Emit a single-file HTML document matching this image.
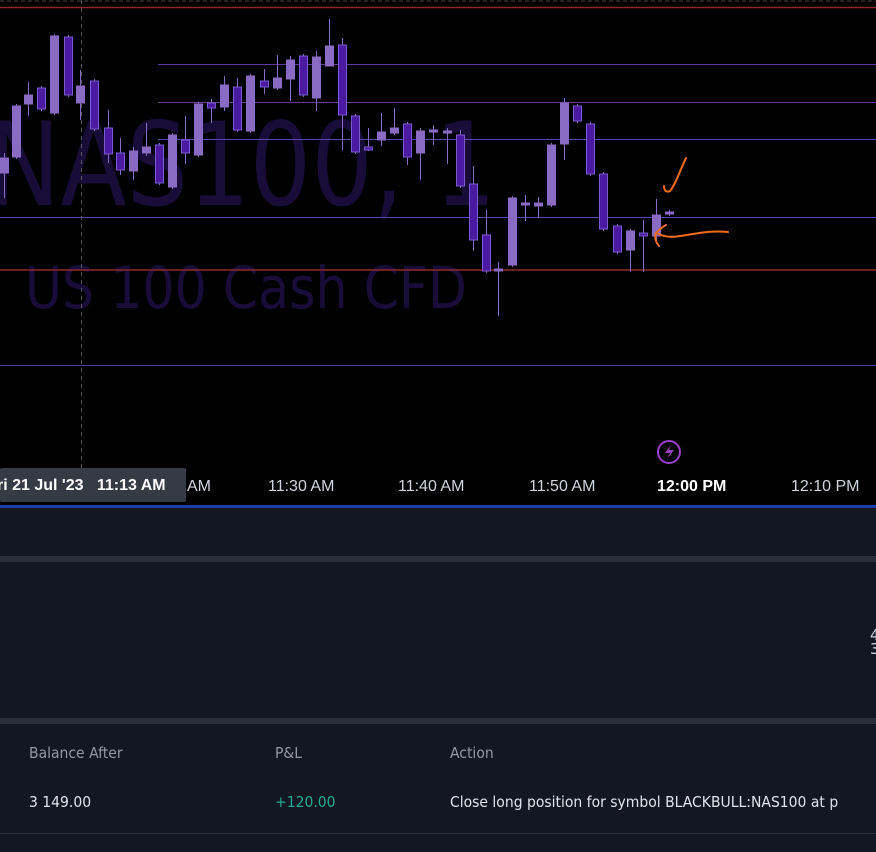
<!DOCTYPE html>
<html><head><meta charset="utf-8"><style>
html,body{margin:0;padding:0;background:#000;width:876px;height:852px;overflow:hidden;font-family:"DejaVu Sans","Liberation Sans",sans-serif}
.t{position:absolute;white-space:nowrap}
.b{font-size:15px;transform-origin:0 0;transform:scaleX(0.93)}
</style></head><body>
<svg width="876" height="852" style="position:absolute;left:0;top:0">
<rect width="876" height="508" fill="#000"/>
<text x="-12" y="205" font-family="DejaVu Sans,sans-serif" font-size="116" fill="#170d38" textLength="508" lengthAdjust="spacingAndGlyphs">NAS100, 1</text>
<text x="25" y="308" font-family="DejaVu Sans,sans-serif" font-size="58" fill="#170d38" textLength="442" lengthAdjust="spacingAndGlyphs">US 100 Cash CFD</text>
<line x1="0" y1="1" x2="876" y2="1" stroke="#444" stroke-dasharray="4,3"/>
<line x1="0" y1="7.5" x2="876" y2="7.5" stroke="#8a2a2a" stroke-width="1.5"/>
<line x1="158" y1="64.5" x2="876" y2="64.5" stroke="#5f3a9a"/>
<line x1="158" y1="102.5" x2="876" y2="102.5" stroke="#6a3a8a"/>
<line x1="158" y1="139.5" x2="876" y2="139.5" stroke="#5a44b0"/>
<line x1="0" y1="217.5" x2="876" y2="217.5" stroke="#5a44b0"/>
<line x1="0" y1="270" x2="876" y2="270" stroke="#8a2a2a" stroke-width="1.5"/>
<line x1="0" y1="365.5" x2="876" y2="365.5" stroke="#4a3a90"/>
<line x1="81.5" y1="0" x2="81.5" y2="468" stroke="#555" stroke-dasharray="4,4"/>
<g id="c"></g>
<path d="M686 158 C680 170 676 184 670 191 C666 193 664 190 664 186" fill="none" stroke="#f26a1b" stroke-width="2" stroke-linecap="round"/>
<path d="M728 232 C710 230 695 234 680 236 C670 238 662 236 656 233 C660 229 664 226 666 225 M656 233 C654 238 656 242 659 246" fill="none" stroke="#f26a1b" stroke-width="2" stroke-linecap="round"/>
<circle cx="669" cy="452" r="11" fill="none" stroke="#9c3fc9" stroke-width="2"/>
<path d="M671 445 L665 453 L670 453 L667 459 L674 450 L669 450 Z" fill="#9c3fc9"/>
<rect x="0" y="505" width="876" height="3" fill="#1e3fa8"/>
<rect x="0" y="508" width="876" height="344" fill="#131722"/>
<rect x="0" y="556" width="876" height="6" fill="#2a2e39"/>
<rect x="0" y="718" width="876" height="6" fill="#2a2e39"/>
<rect x="0" y="833" width="876" height="1" fill="#2a2e39"/>
<rect x="0" y="468" width="186" height="34" rx="2" fill="#363a45"/>
</svg>
<div class="t" style="left:-3px;top:477px;color:#fff;font-size:16px;font-family:'Liberation Sans',sans-serif;font-weight:bold">ri 21 Jul '23 &nbsp; 11:13 AM</div>
<div class="t" style="left:187px;top:478px;color:#d1d4dc;font-size:16px;font-family:'Liberation Sans',sans-serif">AM</div>
<div class="t" style="left:268px;top:478px;color:#d1d4dc;font-size:16px;font-family:'Liberation Sans',sans-serif">11:30 AM</div>
<div class="t" style="left:398px;top:478px;color:#d1d4dc;font-size:16px;font-family:'Liberation Sans',sans-serif">11:40 AM</div>
<div class="t" style="left:529px;top:478px;color:#d1d4dc;font-size:16px;font-family:'Liberation Sans',sans-serif">11:50 AM</div>
<div class="t" style="left:657px;top:478px;color:#fff;font-size:16px;font-family:'Liberation Sans',sans-serif;font-weight:bold">12:00 PM</div>
<div class="t" style="left:791px;top:478px;color:#d1d4dc;font-size:16px;font-family:'Liberation Sans',sans-serif">12:10 PM</div>
<div class="t b" style="left:29px;top:744px;color:#9598a1">Balance After</div>
<div class="t b" style="left:275px;top:744px;color:#9598a1">P&amp;L</div>
<div class="t b" style="left:450px;top:744px;color:#9598a1">Action</div>
<div class="t b" style="left:29px;top:793px;color:#e0e3eb">3 149.00</div>
<div class="t b" style="left:275px;top:793px;color:#22ab94">+120.00</div>
<div class="t b" style="left:450px;top:793px;color:#e0e3eb">Close long position for symbol BLACKBULL:NAS100 at p</div>
<script>
var d=[[0,158,173,153,198,1],[12,106,157,0,0,1],[24,95,104,82,116,1],[37,88,109,0,0,0],[50,36,113,0,0,1],[64,37,95,0,0,0],[76,86,103,70,120,1],[90,81,129,0,0,0],[104,128,154,110,163,0],[116,153,170,138,175,0],[129,151,171,147,180,1],[142,147,153,123,156,1],[155,145,183,0,0,0],[168,135,187,0,0,1],[181,140,153,116,164,0],[194,104,155,0,0,1],[207,103,108,99,123,0],[220,85,107,76,111,1],[233,87,130,78,132,0],[246,76,131,0,0,1],[260,81,87,69,94,0],[273,78,88,55,90,1],[286,60,79,56,101,1],[299,56,95,0,0,0],[312,57,98,51,111,1],[325,46,66,19,66,1],[338,45,115,38,150,0],[351,116,152,0,0,0],[364,147,150,128,151,0],[377,132,140,113,146,1],[390,128,133,108,135,1],[403,124,157,0,165,0],[416,131,153,128,180,1],[429,130,131,125,145,1],[443,131,133,128,164,1],[456,135,186,130,188,0],[469,184,240,166,251,0],[482,235,271,210,273,0],[494,269,271,262,316,1],[508,198,265,0,0,1],[521,203,205,195,221,1],[534,203,206,197,218,1],[547,145,205,0,0,1],[560,103,144,98,160,1],[573,106,121,0,0,0],[586,124,174,0,0,0],[599,174,229,0,0,0],[613,226,252,0,0,0],[626,231,250,229,272,1],[639,233,236,220,272,0],[652,215,236,199,244,1],[665,212,214,0,0,1]];
var s='';d.forEach(function(c){var x=c[0],f=c[5]?'#8a6bc4':'#4a1aa0',st=c[5]?'#8a6bc4':'#7a5bd0';
var wt=c[3]||c[1]-2,wb=c[4]||c[2]+2;
s+='<line x1="'+(x+4.5)+'" y1="'+wt+'" x2="'+(x+4.5)+'" y2="'+wb+'" stroke="#8a6bc4"/>';
s+='<rect x="'+(x+0.5)+'" y="'+c[1]+'" width="8" height="'+Math.max(2,c[2]-c[1])+'" fill="'+f+'" stroke="'+st+'"/>';});
document.getElementById('c').innerHTML=s;
</script>
<div class="t" style="left:870px;top:628px;color:#d1d4dc;font-size:15px;line-height:14px">4<br>3</div>
</body></html>
